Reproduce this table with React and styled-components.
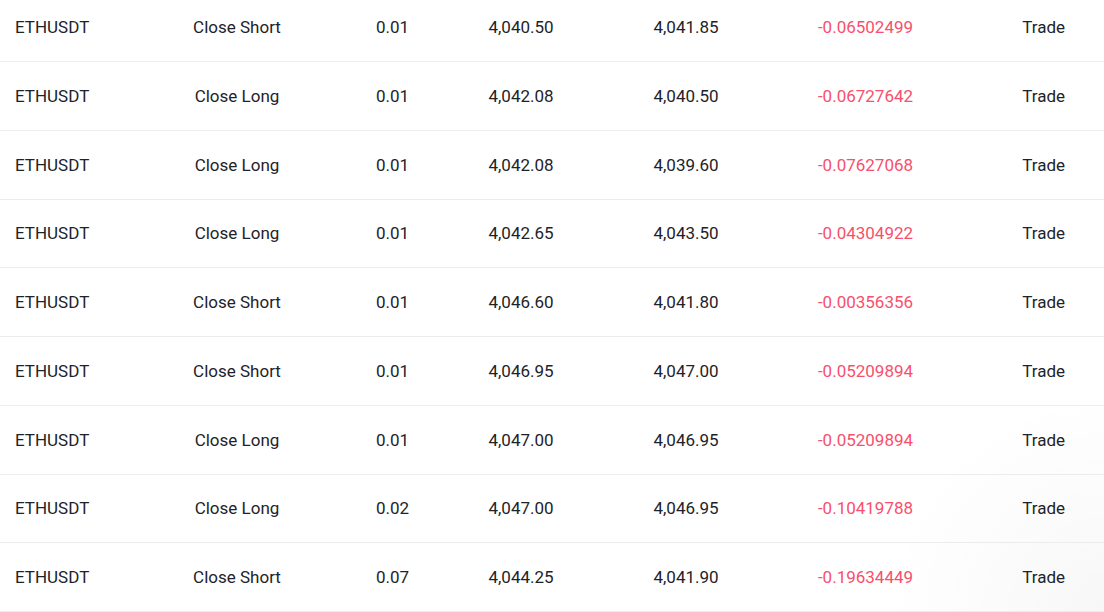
import React from 'react';
import styled, { createGlobalStyle } from 'styled-components';

const GlobalStyle = createGlobalStyle`
	html, body {
		margin: 0;
		padding: 0;
		background: #ffffff;
	}

	body {
		font-family: Roboto, "Liberation Sans", Arial, sans-serif;
		color: #1e2329;
		overflow: hidden;
	}
`;

const Page = styled.div`
	width: 1104px;
	height: 612px;
	overflow: hidden;
	background: radial-gradient(circle at 100% 100%, rgba(0, 0, 0, 0.03) 0, rgba(0, 0, 0, 0) 220px), #ffffff;
`;

const Table = styled.div`
	display: flex;
	flex-direction: column;
	margin-top: -6.75px;
`;

const Row = styled.div`
	display: grid;
	grid-template-columns: 158px 158px 153px 104px 226px 133px 1fr;
	align-items: center;
	height: 68.75px;
	box-sizing: border-box;
	padding-top: 0;
	border-bottom: 1px solid #eaecef;
	font-size: 17px;
	line-height: 20px;
	font-weight: 400;
`;

const Cell = styled.div`
	text-align: ${(p) => p.align || 'center'};
	padding-left: ${(p) => (p.align === 'left' ? '15px' : '0')};
	padding-right: ${(p) => (p.align === 'right' ? '39px' : '0')};
	color: ${(p) => (p.loss ? '#f84f6c' : '#1e2329')};
	white-space: nowrap;
`;

const trades = [
	['ETHUSDT', 'Close Short', '0.01', '4,040.50', '4,041.85', '-0.06502499'],
	['ETHUSDT', 'Close Long', '0.01', '4,042.08', '4,040.50', '-0.06727642'],
	['ETHUSDT', 'Close Long', '0.01', '4,042.08', '4,039.60', '-0.07627068'],
	['ETHUSDT', 'Close Long', '0.01', '4,042.65', '4,043.50', '-0.04304922'],
	['ETHUSDT', 'Close Short', '0.01', '4,046.60', '4,041.80', '-0.00356356'],
	['ETHUSDT', 'Close Short', '0.01', '4,046.95', '4,047.00', '-0.05209894'],
	['ETHUSDT', 'Close Long', '0.01', '4,047.00', '4,046.95', '-0.05209894'],
	['ETHUSDT', 'Close Long', '0.02', '4,047.00', '4,046.95', '-0.10419788'],
	['ETHUSDT', 'Close Short', '0.07', '4,044.25', '4,041.90', '-0.19634449'],
];

const App = () => {
	return (
		<>
			<GlobalStyle />
			<Page>
				<Table>
					{trades.map((t, i) => (
						<Row key={i}>
							<Cell align="left">{t[0]}</Cell>
							<Cell>{t[1]}</Cell>
							<Cell>{t[2]}</Cell>
							<Cell>{t[3]}</Cell>
							<Cell>{t[4]}</Cell>
							<Cell loss>{t[5]}</Cell>
							<Cell align="right">Trade</Cell>
						</Row>
					))}
				</Table>
			</Page>
		</>
	);
}

export default App;
